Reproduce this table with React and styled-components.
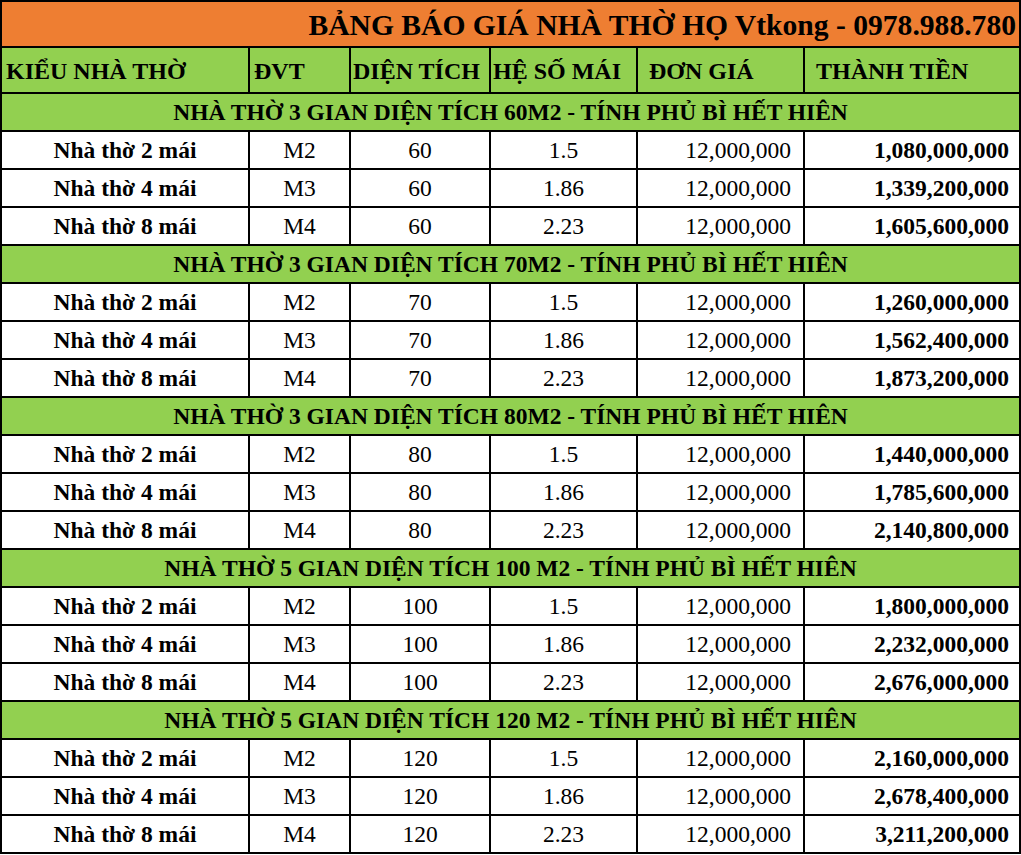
import React from "react";
import styled, { createGlobalStyle } from "styled-components";

const Global = createGlobalStyle`
  html, body { margin: 0; padding: 0; background: #fff; }
  body { font-family: "Liberation Serif", "Times New Roman", serif; color: #000; }
`;

const Table = styled.table`
  border-collapse: collapse;
  width: 1019px;
  table-layout: fixed;
  font-family: "Liberation Serif", "Times New Roman", serif;
`;

const Col = styled.col``;

const Cell = styled.td`
  border: 2px solid #000;
  padding: 2px ${(p) => p.$pad || 4}px 0;
  height: 34px;
  text-align: ${(p) => p.$align || "center"};
  font-weight: ${(p) => (p.$bold ? 700 : 400)};
  font-size: 23.5px;
  background: #fff;
  white-space: nowrap;
  overflow: hidden;
  line-height: 1;
  vertical-align: middle;
`;

const TitleCell = styled(Cell)`
  background: #ee7e32;
  font-size: 29.6px;
  font-weight: 700;
  text-align: right;
  padding: 4px 3px 0 0;
  height: 40px;
`;

const HeadCell = styled(Cell)`
  background: #92d050;
  font-size: 24px;
  font-weight: 700;
  padding-top: 1px;
  height: 43px;
`;

const SectionCell = styled(Cell)`
  background: #92d050;
  font-size: 23.5px;
  font-weight: 700;
`;

const widths = [248, 101, 140, 147, 167, 216];

const sections = [
  { title: "NHÀ THỜ 3 GIAN DIỆN TÍCH 60M2 - TÍNH PHỦ BÌ HẾT HIÊN", area: 60, totals: ["1,080,000,000", "1,339,200,000", "1,605,600,000"] },
  { title: "NHÀ THỜ 3 GIAN DIỆN TÍCH 70M2 - TÍNH PHỦ BÌ HẾT HIÊN", area: 70, totals: ["1,260,000,000", "1,562,400,000", "1,873,200,000"] },
  { title: "NHÀ THỜ 3 GIAN DIỆN TÍCH 80M2 - TÍNH PHỦ BÌ HẾT HIÊN", area: 80, totals: ["1,440,000,000", "1,785,600,000", "2,140,800,000"] },
  { title: "NHÀ THỜ 5 GIAN DIỆN TÍCH 100 M2 - TÍNH PHỦ BÌ HẾT HIÊN", area: 100, totals: ["1,800,000,000", "2,232,000,000", "2,676,000,000"] },
  { title: "NHÀ THỜ 5 GIAN DIỆN TÍCH 120 M2 - TÍNH PHỦ BÌ HẾT HIÊN", area: 120, totals: ["2,160,000,000", "2,678,400,000", "3,211,200,000"] },
];

const kinds = [
  { name: "Nhà thờ 2 mái", unit: "M2", coef: "1.5" },
  { name: "Nhà thờ 4 mái", unit: "M3", coef: "1.86" },
  { name: "Nhà thờ 8 mái", unit: "M4", coef: "2.23" },
];

export default function App() {
  return (
    <>
      <Global />
      <Table>
        <colgroup>
          {widths.map((w, i) => (
            <Col key={i} style={{ width: w }} />
          ))}
        </colgroup>
        <tbody>
          <tr>
            <TitleCell colSpan={6}>BẢNG BÁO GIÁ NHÀ THỜ HỌ Vtkong - 0978.988.780</TitleCell>
          </tr>
          <tr>
            <HeadCell $align="left" $pad={4}>KIỂU NHÀ THỜ</HeadCell>
            <HeadCell $align="left" $pad={4}>ĐVT</HeadCell>
            <HeadCell $align="left" $pad={2}>DIỆN TÍCH</HeadCell>
            <HeadCell $align="left" $pad={2}>HỆ SỐ MÁI</HeadCell>
            <HeadCell $align="left" $pad={11}>ĐƠN GIÁ</HeadCell>
            <HeadCell $align="left" $pad={11}>THÀNH TIỀN</HeadCell>
          </tr>
          {sections.map((s) => (
            <React.Fragment key={s.title}>
              <tr>
                <SectionCell colSpan={6}>{s.title}</SectionCell>
              </tr>
              {kinds.map((k, i) => (
                <tr key={k.name}>
                  <Cell $bold>{k.name}</Cell>
                  <Cell>{k.unit}</Cell>
                  <Cell>{s.area}</Cell>
                  <Cell>{k.coef}</Cell>
                  <Cell $align="right" $pad={12}>12,000,000</Cell>
                  <Cell $align="right" $bold $pad={10}>{s.totals[i]}</Cell>
                </tr>
              ))}
            </React.Fragment>
          ))}
        </tbody>
      </Table>
    </>
  );
}
